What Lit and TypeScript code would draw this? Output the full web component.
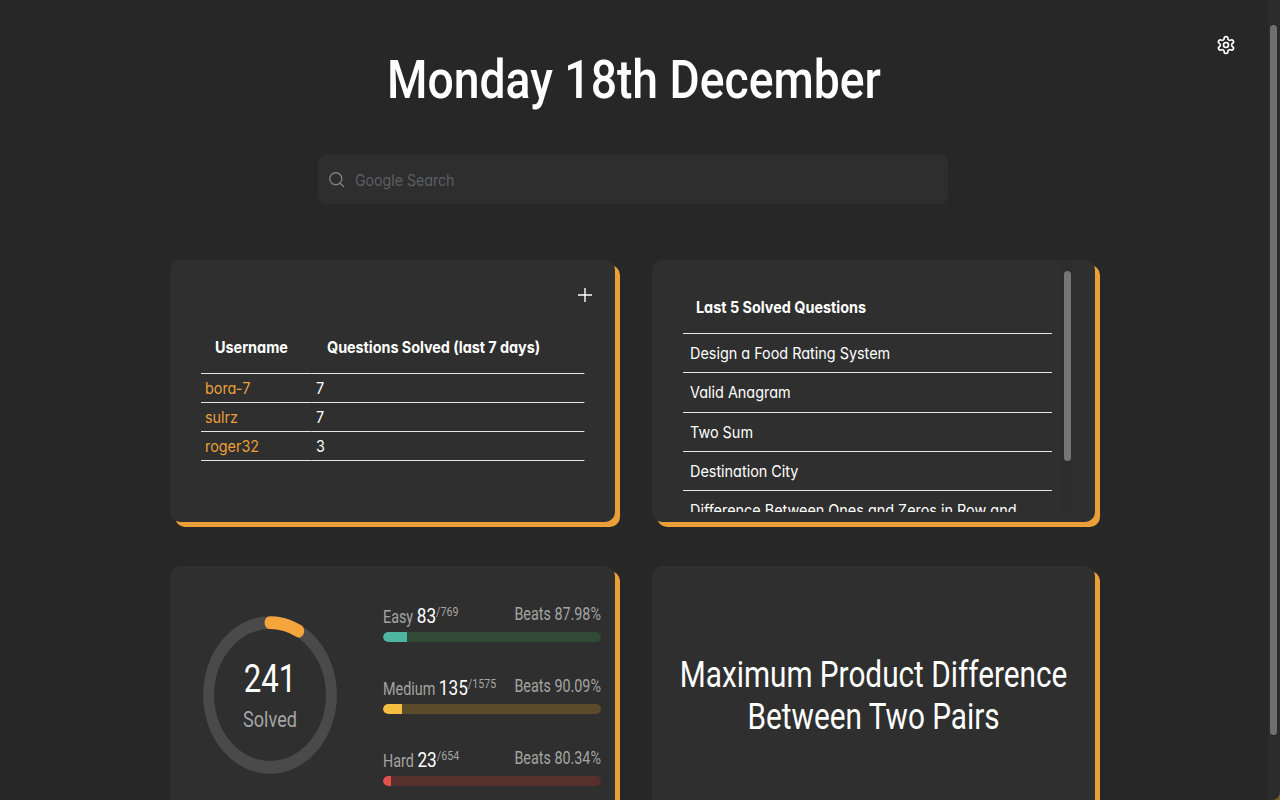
import { LitElement, html, css } from "lit";
import { customElement } from "lit/decorators.js";

const stats = [
  { name: "Easy", n: "83", total: "/769", beats: "Beats 87.98%", pct: 10.8, fg: "#4fb5a3", bg: "#304a36" },
  { name: "Medium", n: "135", total: "/1575", beats: "Beats 90.09%", pct: 8.6, fg: "#f5bd42", bg: "#5b4b2a" },
  { name: "Hard", n: "23", total: "/654", beats: "Beats 80.34%", pct: 3.6, fg: "#e0514b", bg: "#57302e" },
];

@customElement("app-root")
export class AppRoot extends LitElement {
  static styles = css`
    :host {
      display: block;
      height: 100vh;
      overflow: hidden;
      position: relative;
      background: #272727;
      color: #fff;
      font-family: "Roboto", sans-serif;
    }
    .corner { position: absolute; right: 0; bottom: 0; width: 8px; height: 8px; background: #7a5f2a; }
    .sb { position: absolute; right: 0; top: 0; bottom: 0; width: 13px; background: #2b2b2b; border-left: 1px solid #262626; box-sizing: border-box; border-bottom-right-radius: 8px; }
    .sb i { position: absolute; left: 2px; top: 25px; width: 7px; height: 710px; background: #6f6f6f; border-radius: 4px; }
    .page { height: 1100px; padding-top: 50px; box-sizing: border-box; }
    .gear { position: absolute; left: 1216px; top: 35px; width: 20px; height: 20px; }
    h1 { margin: 0; width: 1268px; text-align: center; font: 500 53.5px/60px "Roboto", sans-serif; transform: scaleX(0.865); }
    .search {
      width: 630px; height: 49px; margin: 45px 0 0 318px; background: #2e2e2e; border-radius: 8px;
      display: flex; align-items: center; gap: 10px; padding-left: 10px; box-sizing: border-box;
      color: #5c5e62; font-size: 16px; font-family: "Inter", sans-serif; font-feature-settings: "cv11";
    }
    .search span { transform: scaleX(0.885); transform-origin: left; }
    .grid { display: grid; grid-template-columns: 445px 443px; column-gap: 37px; row-gap: 44px; margin: 56px 0 0 170px; grid-auto-rows: 262px; }
    .card { background: #2f2f2f; border-radius: 10px; box-shadow: 5px 5px 0 #eb9f3a; box-sizing: border-box; position: relative; }
    .plus { position: absolute; left: 407px; top: 27px; width: 16px; height: 16px; }
    table {
      border-collapse: collapse; position: absolute; left: 31px; top: 67px; width: 425.6px;
      transform: scaleX(0.9); transform-origin: left;
      font-family: "Inter", sans-serif; font-feature-settings: "cv11"; font-size: 16px; font-weight: 400;
    }
    th { font-weight: 700; height: 46px; text-align: left; padding: 0 0 6px 15.5px; box-sizing: border-box; border-bottom: 1px solid #e6e6e6; }
    th + th { padding-left: 16.7px; letter-spacing: -0.05px; }
    td { height: 29px; padding: 0 0 0 4.4px; box-sizing: border-box; border-bottom: 1px solid #e6e6e6; }
    td.user { color: #eb9f3a; width: 123.3px; }
    .list { position: absolute; inset: 0 0 10px 0; overflow: hidden; font-family: "Inter", sans-serif; font-feature-settings: "cv11"; font-size: 16px; font-weight: 400; }
    .list-inner { margin-left: 31px; width: 410px; padding-top: 24px; transform: scaleX(0.9); transform-origin: left; }
    .lh { font-weight: 700; padding-left: 14.4px; height: 50px; padding-bottom: 4px; box-sizing: border-box; display: flex; align-items: center; border-bottom: 1px solid #e6e6e6; }
    .li { padding: 9px 7.8px; line-height: 20.3px; white-space: nowrap; border-bottom: 1px solid #e6e6e6; }
    .lsb { position: absolute; left: 408px; top: 0; bottom: 8px; width: 13px; background: #2d2d2d; }
    .lsb i { position: absolute; left: 4px; top: 11px; width: 7px; height: 190px; background: #757575; border-radius: 4px; }
    .ring { position: absolute; left: 33px; top: 50px; width: 134px; height: 158px; }
    .ring-text { position: absolute; left: 33px; width: 134px; text-align: center; transform: scaleX(0.82); }
    .ring-n { top: 91px; font-size: 38px; line-height: 44px; }
    .ring-l { top: 141px; font-size: 22px; line-height: 26px; color: #a4a4a4; }
    .stats { position: absolute; left: 213px; top: 36px; width: 218px; display: flex; flex-direction: column; gap: 30px; }
    .row { height: 42px; }
    .hd {
      display: flex; justify-content: space-between; white-space: nowrap;
      width: 265.8px; height: 30px; align-items: flex-start; transform: scaleX(0.82); transform-origin: left;
      color: #a4a4a4; font-size: 17.5px; line-height: 22px;
    }
    .hd .l { margin-top: 3px; }
    .hd .r { margin-top: 1px; }
    .hd b { font-weight: 400; color: #fff; font-size: 21px; }
    .hd sup { font-size: 13px; line-height: 0; }
    .track { height: 10px; border-radius: 5px; overflow: hidden; }
    .fill { height: 100%; border-radius: 5px 0 0 5px; }
    .q { display: flex; align-items: center; justify-content: center; text-align: center; }
    .q div { font-size: 36px; line-height: 42px; white-space: nowrap; transform: scaleX(0.826); margin-top: -2px; }
  `;

  render() {
    return html`<div class="page">
      <svg class="gear" viewBox="0 0 24 24" fill="none" stroke="#fff" stroke-width="2" stroke-linecap="round" stroke-linejoin="round">
        <path d="M12.22 2h-.44a2 2 0 0 0-2 2v.18a2 2 0 0 1-1 1.73l-.43.25a2 2 0 0 1-2 0l-.15-.08a2 2 0 0 0-2.73.73l-.22.38a2 2 0 0 0 .73 2.73l.15.1a2 2 0 0 1 1 1.72v.51a2 2 0 0 1-1 1.74l-.15.09a2 2 0 0 0-.73 2.73l.22.38a2 2 0 0 0 2.73.73l.15-.08a2 2 0 0 1 2 0l.43.25a2 2 0 0 1 1 1.73V20a2 2 0 0 0 2 2h.44a2 2 0 0 0 2-2v-.18a2 2 0 0 1 1-1.73l.43-.25a2 2 0 0 1 2 0l.15.08a2 2 0 0 0 2.73-.73l.22-.39a2 2 0 0 0-.73-2.73l-.15-.08a2 2 0 0 1-1-1.74v-.5a2 2 0 0 1 1-1.74l.15-.09a2 2 0 0 0 .73-2.73l-.22-.38a2 2 0 0 0-2.73-.73l-.15.08a2 2 0 0 1-2 0l-.43-.25a2 2 0 0 1-1-1.73V4a2 2 0 0 0-2-2z"/>
        <circle cx="12" cy="12" r="3"/>
      </svg>
      <h1>Monday 18th December</h1>
      <div class="search">
        <svg width="17" height="17" viewBox="0 0 24 24" fill="none" stroke="#7b7d80" stroke-width="2" stroke-linecap="round"><circle cx="11" cy="11" r="8.5"/><path d="M17.5 17.5 22 22"/></svg>
        <span>Google Search</span>
      </div>
      <div class="grid">
        <div class="card">
          <svg class="plus" viewBox="0 0 16 16" stroke="#fff" stroke-width="1.4"><path d="M8 1v14M1 8h14"/></svg>
          <table>
            <tr><th>Username</th><th>Questions Solved (last 7 days)</th></tr>
            <tr><td class="user">bora-7</td><td>7</td></tr>
            <tr><td class="user">sulrz</td><td>7</td></tr>
            <tr><td class="user">roger32</td><td>3</td></tr>
          </table>
        </div>
        <div class="card">
          <div class="list"><div class="list-inner">
            <div class="lh">Last 5 Solved Questions</div>
            <div class="li">Design a Food Rating System</div>
            <div class="li">Valid Anagram</div>
            <div class="li">Two Sum</div>
            <div class="li">Destination City</div>
            <div class="li">Difference Between Ones and Zeros in Row and<br />Column</div>
          </div></div>
          <div class="lsb"><i></i></div>
        </div>
        <div class="card">
          <svg class="ring" viewBox="0 0 100 100" preserveAspectRatio="none" fill="none">
            <circle cx="50" cy="50" r="45.8" stroke="#4a4a4a" stroke-width="8.2"/>
            <circle cx="50" cy="50" r="45.8" stroke="#f5a53c" stroke-width="8.2" stroke-linecap="round" pathLength="360" stroke-dasharray="28 332" transform="rotate(-90 50 50)"/>
          </svg>
          <div class="ring-text ring-n">241</div>
          <div class="ring-text ring-l">Solved</div>
          <div class="stats">
            ${stats.map((s) => html`<div class="row">
              <div class="hd"><span class="l">${s.name} <b>${s.n}</b><sup>${s.total}</sup></span><span class="r">${s.beats}</span></div>
              <div class="track" style="background:${s.bg}"><div class="fill" style="width:${s.pct}%;background:${s.fg}"></div></div>
            </div>`)}
          </div>
        </div>
        <div class="card q"><div>Maximum Product Difference<br />Between Two Pairs</div></div>
      </div>
      <div class="corner"></div>
      <div class="sb"><i></i></div>
    </div>`;
  }
}
